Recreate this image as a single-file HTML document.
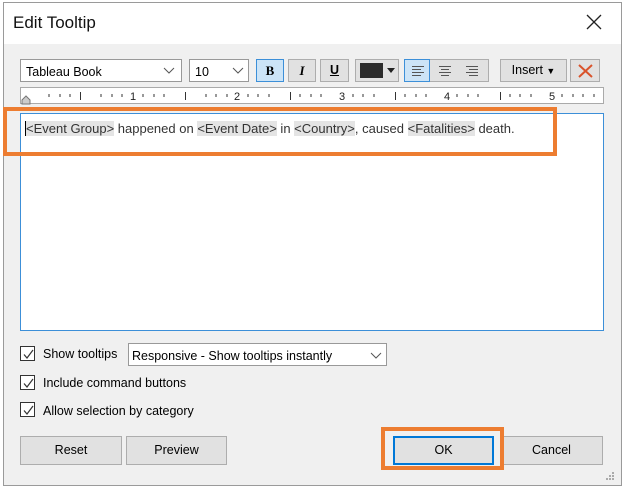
<!DOCTYPE html>
<html><head><style>
*{box-sizing:border-box;margin:0;padding:0}
body{width:623px;height:486px;background:#fff;position:relative;overflow:hidden;font-family:"Liberation Sans",sans-serif;font-size:12px;color:#000}
.a{position:absolute}
.dlg{left:3px;top:2px;width:619px;height:484px;background:#f0f0f0;border:1px solid #9a9a9a}
.title{left:4px;top:3px;width:617px;height:41px;background:#fff}
.btn{position:absolute;background:#e1e1e1;border:1px solid #adadad;text-align:center;font-size:12.5px}
.box{position:absolute;background:#fff;border:1px solid #7a7a7a}
.tag{background:#e4e4e4;color:#333}
.cb{position:absolute;width:15px;height:15px;border:1px solid #333;background:#fff}
.cb svg{position:absolute;left:1px;top:1px}
.lbl{position:absolute;font-size:12.5px}
</style></head><body>
<div class="a dlg"></div>
<div class="a title"></div>
<div class="a" style="left:13px;top:13px;font-size:17px;color:#111">Edit Tooltip</div>
<svg class="a" style="left:586px;top:14px" width="16" height="16"><path d="M1 1L15 15M15 1L1 15" stroke="#222" stroke-width="1.3"/></svg>

<!-- toolbar -->
<div class="box" style="left:20px;top:59px;width:162px;height:23px;border-color:#999"><span class="a" style="left:5px;top:5px;font-size:12.5px">Tableau Book</span><svg class="a" style="left:142px;top:7px" width="12" height="8"><path d="M1 1L6 6L11 1" stroke="#555" fill="none"/></svg></div>
<div class="box" style="left:189px;top:59px;width:60px;height:23px;border-color:#999"><span class="a" style="left:5px;top:5px;font-size:12.5px">10</span><svg class="a" style="left:42px;top:7px" width="12" height="8"><path d="M1 1L6 6L11 1" stroke="#555" fill="none"/></svg></div>
<div class="btn" style="left:256px;top:59px;width:28px;height:23px;background:#cce4f7;border-color:#3c8fd8;font-weight:bold;line-height:21px;font-family:'Liberation Serif',serif;font-size:13px">B</div>
<div class="btn" style="left:288px;top:59px;width:28px;height:23px;line-height:21px;font-style:italic;font-weight:bold;font-family:'Liberation Serif',serif;font-size:13px">I</div>
<div class="btn" style="left:320px;top:59px;width:29px;height:23px;line-height:21px;font-weight:bold;text-decoration:underline">U</div>
<div class="btn" style="left:355px;top:59px;width:44px;height:23px"><div class="a" style="left:4px;top:3px;width:23px;height:15px;background:#2b2b2b"></div><svg class="a" style="left:31px;top:8px" width="8" height="5"><path d="M0 0H8L4 5Z" fill="#222"/></svg></div>
<div class="btn" style="left:404px;top:59px;width:85px;height:23px"></div>
<div class="btn" style="left:404px;top:59px;width:26px;height:23px;background:#cce4f7;border-color:#3c8fd8"></div>
<svg class="a" style="left:410px;top:64px" width="75" height="13"><g stroke="#555" stroke-width="1"><path d="M2 2.5H14M2 5.5H11M2 8.5H14M2 11.5H11"/><path d="M29 2.5H41M31 5.5H39M29 8.5H41M31 11.5H39"/><path d="M56 2.5H68M59 5.5H68M56 8.5H68M59 11.5H68"/></g></svg>
<div class="btn" style="left:500px;top:59px;width:67px;height:23px;line-height:21px">Insert <span style="font-size:9px">▼</span></div>
<div class="btn" style="left:570px;top:59px;width:30px;height:23px"><svg class="a" style="left:6px;top:3px" width="17" height="16"><path d="M2 2L15 14M15 2L2 14" stroke="#d9532b" stroke-width="2"/></svg></div>

<!-- ruler -->
<div class="box" style="left:20px;top:87px;width:584px;height:17px;border-color:#aaa"></div>
<svg class="a" style="left:20px;top:87px" width="584" height="20">
<g fill="#222" font-family="Liberation Sans" font-size="11">
<text x="110" y="13">1</text><text x="214" y="13">2</text><text x="319" y="13">3</text><text x="424" y="13">4</text><text x="529" y="13">5</text></g>
<g stroke="#333">
<path d="M29 7v3M40 7v3M50 7v3M81 7v3M92 7v3M102 7v3M123 7v3M134 7v3M144 7v3M186 7v3M196 7v3M207 7v3M228 7v3M238 7v3M249 7v3M280 7v3M291 7v3M301 7v3M333 7v3M343 7v3M354 7v3M385 7v3M396 7v3M406 7v3M437 7v3M448 7v3M458 7v3M490 7v3M500 7v3M511 7v3M542 7v3M553 7v3M563 7v3M574 7v3"/>
<path d="M60.5 5v8M165.5 5v8M270.5 5v8M375.5 5v8M480.5 5v8"/></g>
<path d="M2 13L6 9L10 13V17H2Z" fill="#ccc" stroke="#777"/>
</svg>

<!-- text area -->
<div class="a" style="left:20px;top:113px;width:584px;height:218px;background:#fff;border:1px solid #3c8fd8"></div>
<div class="a" style="left:25px;top:121px;font-size:13px;color:#333;white-space:nowrap;border-left:1px solid #000"><span class="tag">&lt;Event Group&gt;</span> happened on <span class="tag">&lt;Event Date&gt;</span> in <span class="tag">&lt;Country&gt;</span>, caused <span class="tag">&lt;Fatalities&gt;</span> death.</div>
<div class="a" style="left:3px;top:107px;width:554px;height:49px;border:4px solid #ed7d31"></div>

<!-- options -->
<div class="cb" style="left:20px;top:346px"><svg width="13" height="13"><path d="M2 6.5L5 10L11 2" stroke="#333" fill="none" stroke-width="1.2"/></svg></div>
<div class="lbl" style="left:43px;top:347px">Show tooltips</div>
<div class="box" style="left:128px;top:343px;width:259px;height:23px;border-color:#999"><span class="a" style="left:3px;top:5px;font-size:12.5px">Responsive - Show tooltips instantly</span><svg class="a" style="left:241px;top:8px" width="12" height="8"><path d="M1 1L6 6L11 1" stroke="#555" fill="none"/></svg></div>
<div class="cb" style="left:20px;top:375px"><svg width="13" height="13"><path d="M2 6.5L5 10L11 2" stroke="#333" fill="none" stroke-width="1.2"/></svg></div>
<div class="lbl" style="left:43px;top:376px">Include command buttons</div>
<div class="cb" style="left:20px;top:402px"><svg width="13" height="13"><path d="M2 6.5L5 10L11 2" stroke="#333" fill="none" stroke-width="1.2"/></svg></div>
<div class="lbl" style="left:43px;top:404px">Allow selection by category</div>

<!-- buttons -->
<div class="btn" style="left:20px;top:436px;width:102px;height:29px;line-height:27px">Reset</div>
<div class="btn" style="left:126px;top:436px;width:101px;height:29px;line-height:27px">Preview</div>
<div class="btn" style="left:393px;top:436px;width:101px;height:29px;line-height:25px;border:2px solid #0078d7">OK</div>
<div class="btn" style="left:500px;top:436px;width:103px;height:29px;line-height:27px">Cancel</div>
<div class="a" style="left:381px;top:427px;width:123px;height:43px;border:4px solid #ed7d31"></div>
<svg class="a" style="left:606px;top:472px" width="10" height="10" fill="#aaa"><rect x="6" y="0" width="2" height="2"/><rect x="3" y="3" width="2" height="2"/><rect x="6" y="3" width="2" height="2"/><rect x="0" y="6" width="2" height="2"/><rect x="3" y="6" width="2" height="2"/><rect x="6" y="6" width="2" height="2"/></svg>
</body></html>
